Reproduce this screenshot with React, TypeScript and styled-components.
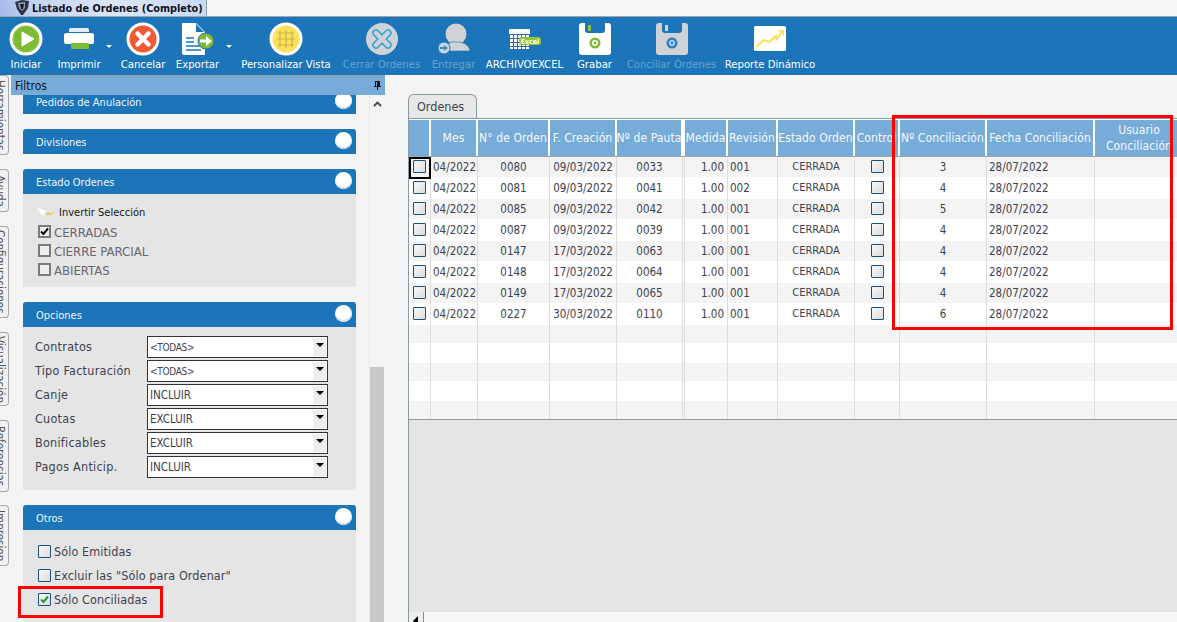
import React from "react";
import styled, { createGlobalStyle } from "styled-components";

const Global = createGlobalStyle`
  html, body { margin: 0; padding: 0; width: 1177px; height: 622px; overflow: hidden; background: #f4f4f4; }
  * { box-sizing: border-box; }
  body { font-family: "DejaVu Sans", "Noto Sans", sans-serif; font-stretch: condensed; font-size: 11px; color: #3c3c46; }
`;

const Page = styled.div`
  position: relative;
  width: 1177px;
  height: 622px;
  display: flex;
  flex-direction: column;
  overflow: hidden;
  background: #f4f4f4;
`;

const TabStrip = styled.div`
  height: 17px;
  flex: none;
  display: flex;
  background: #f6f6f6;
  border-bottom: 1px solid #a0a5ad;
`;
const DocTab = styled.div`
  width: 207px;
  height: 16px;
  display: flex;
  align-items: center;
  gap: 2px;
  padding-left: 14px;
  background: linear-gradient(80deg, #a3b9e6 0%, #c0d1f0 14%, #dbe6f7 55%, #c9d9f3 100%);
  border-right: 1px solid #8f9aa8;
  font-size: 10.8px;
  font-weight: 700;
  color: #10131c;
  white-space: nowrap;
  svg { flex: none; }
`;

const Toolbar = styled.div`
  height: 58px;
  flex: none;
  display: flex;
  background: #1c75b9;
  padding-left: 9px;
`;
const ToolItem = styled.div<{ $w: number; $ml: number; $off?: boolean }>`
  width: ${(p) => p.$w}px;
  margin-left: ${(p) => p.$ml}px;
  flex: none;
  display: flex;
  flex-direction: column;
  align-items: center;
  color: ${(p) => (p.$off ? "#6ba0cb" : "#ffffff")};
  white-space: nowrap;
`;
const IconSlot = styled.div`
  height: 44px;
  display: flex;
  align-items: center;
  justify-content: center;
  flex: none;
  svg { display: block; }
`;
const ToolLabel = styled.div`
  line-height: 13px;
  font-size: 11.25px;
  margin-top: -3px;
`;
const Caret = styled.div<{ $ml: number }>`
  flex: none;
  margin-left: ${(p) => p.$ml}px;
  margin-top: 28px;
  width: 0;
  height: 0;
  border-left: 3px solid transparent;
  border-right: 3px solid transparent;
  border-top: 3px solid #fff;
`;

const Body = styled.div`
  flex: 1;
  min-height: 0;
  display: flex;
`;

const SideTabs = styled.div`
  width: 11px;
  flex: none;
  display: flex;
  flex-direction: column;
  background: #f4f4f4;
`;
const SideTab = styled.div<{ $h: number; $gap: number }>`
  width: 9px;
  height: ${(p) => p.$h}px;
  margin-bottom: ${(p) => p.$gap}px;
  flex: none;
  border: 1px solid #a9a9a9;
  border-left: none;
  border-radius: 0 4px 4px 0;
  background: #f1f1f1;
  writing-mode: vertical-rl;
  text-align: center;
  line-height: 16px;
  font-size: 11.5px;
  color: #555;
  overflow: hidden;
  white-space: nowrap;
`;

const FilterDock = styled.div`
  width: 374px;
  flex: none;
  display: flex;
  flex-direction: column;
`;
const DockHeader = styled.div`
  height: 20px;
  flex: none;
  display: flex;
  align-items: center;
  justify-content: space-between;
  padding: 0 3px 0 4px;
  background: #77acd9;
  border-top: 1px solid #9a9fa5;
  color: #10131c;
  font-size: 12px;
`;
const DockBody = styled.div`
  flex: 1;
  min-height: 0;
  display: flex;
  overflow: hidden;
`;
const PanelColumn = styled.div`
  width: 345px;
  flex: none;
  padding: 0 0 0 12px;
  display: flex;
  flex-direction: column;
  gap: 15px;
  margin-top: -6px;
`;
const Panel = styled.section`
  display: flex;
  flex-direction: column;
  flex: none;
`;
const PanelHead = styled.div`
  height: 25px;
  flex: none;
  display: flex;
  align-items: center;
  justify-content: space-between;
  padding: 2px 4px 0 13px;
  background: #1c75b9;
  border-radius: 3px 3px 0 0;
  color: #eef5fb;
  font-size: 11px;
`;
const Knob = styled.span`
  width: 17px;
  height: 17px;
  border-radius: 50%;
  background: #ffffff;
  box-shadow: inset 0 -2px 0 #d8dfe8;
  flex: none;
  align-self: flex-start;
  margin-top: 1px;
`;
const PanelBody = styled.div<{ $h: number; $pt: number }>`
  height: ${(p) => p.$h}px;
  padding-top: ${(p) => p.$pt}px;
  background: #e5e5e5;
`;
const InvertRow = styled.div`
  display: flex;
  align-items: center;
  height: 15px;
  padding-left: 13px;
  gap: 4px;
  color: #14161e;
  margin-bottom: 3px;
`;
const FlatRow = styled.div`
  display: flex;
  align-items: center;
  height: 19px;
  padding-left: 15px;
  gap: 3px;
  font-size: 13px;
  color: #666670;
  white-space: nowrap;
`;
const FlatBox = styled.span`
  width: 13px;
  height: 13px;
  flex: none;
  margin-top: -3px;
  border: 2px solid #7a7a7a;
  background: #eeeeee;
  display: flex;
  align-items: center;
  justify-content: center;
`;
const FormRow = styled.div`
  height: 24px;
  display: flex;
  align-items: center;
  padding-left: 12px;
  font-size: 12.5px;
  letter-spacing: 0.25px;
  color: #3c4250;
`;
const FormLabel = styled.span`
  width: 112px;
  flex: none;
  white-space: nowrap;
  margin-top: -2px;
`;
const Select = styled.div`
  width: 181px;
  height: 22px;
  flex: none;
  display: flex;
  align-items: center;
  justify-content: space-between;
  padding: 1px 1px 1px 2px;
  background: #fff;
  border: 1px solid #333;
  color: #3c4250;
  letter-spacing: 0;
`;
const SelectValue = styled.span<{ $tight: boolean }>`
  font-size: ${(p) => (p.$tight ? "10px" : "11.5px")};
  letter-spacing: ${(p) => (p.$tight ? "-0.3px" : "0")};
`;
const SelectArrow = styled.span`
  width: 13px;
  height: 18px;
  background: #efefef;
  display: flex;
  align-items: flex-start;
  justify-content: center;
  padding-top: 5px;
  &::after {
    content: "";
    border-left: 4px solid transparent;
    border-right: 4px solid transparent;
    border-top: 4px solid #000;
  }
`;
const CheckRow = styled.div`
  height: 24px;
  display: flex;
  align-items: center;
  padding-left: 15px;
  gap: 3px;
  font-size: 12.5px;
  letter-spacing: 0.1px;
  color: #3c4250;
  white-space: nowrap;
`;
const BlueBox = styled.span`
  width: 13px;
  height: 13px;
  flex: none;
  border: 1px solid #1d4f7c;
  border-radius: 1px;
  background: linear-gradient(135deg, #f8f8f8, #dcdcdc);
  display: flex;
  align-items: center;
  justify-content: center;
`;
const DockScroll = styled.div`
  width: 15px;
  flex: none;
  margin-left: 13px;
  display: flex;
  flex-direction: column;
  background: #f4f4f4;
  border-left: 1px solid #e9e9e9;
`;
const ScrollUp = styled.div`
  height: 272px;
  flex: none;
  display: flex;
  justify-content: center;
  padding-top: 6px;
`;
const ScrollThumb = styled.div`
  flex: 1;
  background: #c9c9c9;
`;

const Main = styled.div`
  flex: 1;
  min-width: 0;
  display: flex;
  flex-direction: column;
  padding: 19px 0 0 23px;
`;
const GridTab = styled.div`
  width: 69px;
  height: 24px;
  flex: none;
  display: flex;
  align-items: center;
  padding-left: 8px;
  border: 1px solid #8a9aa3;
  border-bottom: none;
  border-radius: 6px 6px 0 0;
  background: #e8e8e8;
  font-size: 12.5px;
  color: #3c4250;
`;
const GridBox = styled.div`
  flex: 1;
  min-height: 0;
  display: flex;
  flex-direction: column;
  border-top: 1px solid #8a9aa3;
  border-left: 1px solid #8a9aa3;
  background: #e5e5e5;
  overflow: hidden;
`;
const GRID = "22px 47px 72px 67px 66px 2px 43px 50px 77px 45px 87px 108px 90px";
const HeadRow = styled.div`
  height: 38px;
  flex: none;
  display: grid;
  grid-template-columns: ${GRID};
  background: #fff;
  border-bottom: 1px solid #a4a4a4;
`;
const HeadCell = styled.div`
  background: #77acd9;
  border-right: 2px solid #fff;
  border-top: 1px solid #fff;
  display: flex;
  align-items: center;
  justify-content: center;
  text-align: center;
  color: #f4f8fc;
  font-size: 12px;
  letter-spacing: 0.1px;
  line-height: 16px;
  white-space: nowrap;
  overflow: hidden;
`;
const DataRow = styled.div<{ $h: number; $alt: boolean }>`
  height: ${(p) => p.$h}px;
  flex: none;
  display: grid;
  grid-template-columns: ${GRID};
  background: ${(p) => (p.$alt ? "#f4f4f4" : "#ffffff")};
`;
const Cell = styled.div<{ $al?: string }>`
  border-right: 1px solid #dddddd;
  display: flex;
  align-items: center;
  justify-content: ${(p) => p.$al || "center"};
  padding: ${(p) => (p.$al === "flex-start" ? "0 0 1px 2px" : p.$al === "flex-end" ? "0 3px 1px 0" : "0 0 1px")};
  font-size: 11.5px;
  color: #3c4250;
  white-space: nowrap;
  overflow: hidden;
`;
const FocusCell = styled(Cell)`
  position: relative;
  overflow: visible;
  z-index: 1;
  &::after {
    content: "";
    position: absolute;
    inset: 0 -1px -2px 0;
    border: 2px solid #000;
  }
`;
const StateCell = styled(Cell)`
  font-size: 11px;
`;
const SlimCell = styled(Cell)`
  padding: 0;
  justify-content: flex-start;
`;
const GridFill = styled.div`
  flex: 1;
  min-height: 0;
  border-top: 1px solid #999;
`;
const HScroll = styled.div`
  height: 10px;
  flex: none;
  display: flex;
  background-color: #f8f8f8;
  background-image: radial-gradient(#ececec 0.5px, transparent 0.6px);
  background-size: 2px 2px;
`;
const HButton = styled.div`
  width: 15px;
  height: 10px;
  flex: none;
  background: #efefef;
  border-right: 1px solid #8e8e8e;
  overflow: hidden;
  padding: 4px 0 0 4px;
  &::after {
    content: "";
    display: block;
    width: 0;
    height: 0;
    border-top: 5px solid transparent;
    border-bottom: 5px solid transparent;
    border-right: 5px solid #000;
  }
`;

const RedMark = styled.div<{ $x: number; $y: number; $w: number; $h: number }>`
  position: absolute;
  left: ${(p) => p.$x}px;
  top: ${(p) => p.$y}px;
  width: ${(p) => p.$w}px;
  height: ${(p) => p.$h}px;
  border: 3px solid #ff0000;
  pointer-events: none;
`;

const Logo = () => (
  <svg width="16" height="16" viewBox="0 0 16 16">
    <path d="M1 2 L8 0 L15 1 L14 8 L9 15 L7 15 L3 9 Z" fill="#2b3140" />
    <path d="M4 3 L11 2 L11 8 L8 11 L5 8 Z" fill="#8f9bb3" />
    <path d="M6 4 L10 4 L9 9 L7 9 Z" fill="#131722" />
  </svg>
);
const IconPlay = () => (
  <svg width="34" height="34" viewBox="0 0 34 34">
    <circle cx="17" cy="17" r="15" fill="#8cc63f" stroke="#fff" strokeWidth="3" />
    <circle cx="17" cy="17" r="12" fill="#7dbb35" />
    <path d="M13 10 L25 17 L13 24 Z" fill="#fff" stroke="#fff" strokeLinejoin="round" />
  </svg>
);
const IconPrinter = () => (
  <svg width="34" height="32" viewBox="0 0 34 32">
    <path d="M7 9 V7 Q7 5 9 5 H25 Q27 5 27 7 V9 Z" fill="#e4eef6" />
    <path d="M2 12 Q2 10 5 10 H29 Q32 10 32 12 V19 Q32 21 30 21 H4 Q2 21 2 19 Z" fill="#fff" />
    <rect x="9" y="20" width="18" height="6" rx="1" fill="#7ebb35" />
  </svg>
);
const IconCancel = () => (
  <svg width="34" height="34" viewBox="0 0 34 34">
    <circle cx="17" cy="17" r="15" fill="#f15a33" stroke="#fff" strokeWidth="3" />
    <path d="M11.5 11.5 L22.5 22.5 M22.5 11.5 L11.5 22.5" stroke="#fff" strokeWidth="4.5" strokeLinecap="round" />
  </svg>
);
const IconExport = () => (
  <svg width="34" height="34" viewBox="0 0 34 34">
    <path d="M1 1 H15 L24 10 V33 H3 Q1 33 1 31 Z" fill="#fff" />
    <path d="M15 2 L23 10 H15 Z" fill="#1c75b9" />
    <path d="M5 16 H13 M5 20 H13 M5 24 H20 M5 28 H20" stroke="#1c75b9" strokeWidth="1.3" />
    <circle cx="25" cy="19" r="8" fill="#7ebb35" stroke="#1c75b9" strokeWidth="1" />
    <path d="M19 17.5 H25 V14 L31 19 L25 24 V20.5 H19 Z" fill="#fff" />
  </svg>
);
const IconGrid = () => (
  <svg width="34" height="34" viewBox="0 0 34 34">
    <circle cx="17" cy="17" r="15" fill="#ffe05c" stroke="#fff" strokeWidth="3" />
    <path d="M11 9 V25 M17 8 V26 M23 9 V25 M9 11 H25 M8 17 H26 M9 23 H25" stroke="#c3b54a" strokeWidth="1.2" fill="none" />
  </svg>
);
const IconCloseOff = () => (
  <svg width="34" height="34" viewBox="0 0 34 34">
    <circle cx="17" cy="17" r="16" fill="#cfd2d6" />
    <path d="M11 11 L23 23 M23 11 L11 23" stroke="#38a3dc" strokeWidth="7.5" strokeLinecap="round" />
    <path d="M11 11 L23 23 M23 11 L11 23" stroke="#cfd2d6" strokeWidth="4.5" strokeLinecap="round" />
  </svg>
);
const IconDeliver = () => (
  <svg width="36" height="34" viewBox="0 0 36 34">
    <circle cx="20" cy="12" r="10.5" fill="#cfd2d6" />
    <path d="M8 29 Q9 22 16 20 H24 Q33 22 34 29 Z" fill="#cfd2d6" stroke="#1c75b9" strokeWidth="0.6" />
    <circle cx="8" cy="26" r="6" fill="#cfd2d6" stroke="#1c75b9" strokeWidth="1" />
    <path d="M4 25 H8 V23 L12 26 L8 29 V27 H4 Z" fill="#3b8bc9" />
  </svg>
);
const IconExcel = () => (
  <svg width="34" height="24" viewBox="0 0 34 24">
    <rect x="1" y="2" width="21" height="20" rx="1" fill="#fff" />
    <path d="M1.5 7 V22 M5.5 7 V22 M9.5 7 V22 M13.5 7 V22 M17.5 7 V22 M21.5 7 V22 M1 7.5 H22 M1 11.5 H22 M1 15.5 H22 M1 19.5 H22" stroke="#2f6f9f" strokeWidth="1" fill="none" />
    <rect x="11" y="10" width="22" height="8" rx="3" fill="#8cc63f" />
    <text x="22" y="16.5" textAnchor="middle" fontSize="7" fontWeight="700" fill="#ffffff" fontFamily="'DejaVu Sans', sans-serif">Excel</text>
  </svg>
);
const Floppy = ({ body, dot, ring }: { body: string; dot: string; ring: string }) => (
  <svg width="32" height="33" viewBox="0 0 32 33">
    <path d="M3 0 H29 Q32 0 32 3 V29 Q32 32 29 32 H3 Q0 32 0 29 V3 Q0 0 3 0 Z" fill={body} />
    <path d="M6 0 V7 Q6 10 9 10 H23 Q26 10 26 7 V0 Z" fill="#1c75b9" />
    <rect x="9" y="2" width="3" height="6" fill={dot} />
    <circle cx="16" cy="20" r="5.5" fill={ring} />
    <circle cx="16" cy="20" r="3" fill={body} />
    <circle cx="16" cy="20" r="1.4" fill={ring} />
  </svg>
);
const IconChart = () => (
  <svg width="32" height="26" viewBox="0 0 32 26">
    <rect x="0" y="0" width="32" height="25" rx="1.5" fill="#fff" />
    <path d="M2 21 L10 14 L15 16 L22 10 L23 13 L28 6" stroke="#ffe05c" strokeWidth="2" fill="none" />
    <path d="M24.5 4 H30 V10 Z" fill="#ffe05c" />
  </svg>
);

type Tool = { label: string; w: number; ml: number; off?: boolean; icon: React.ReactNode; caret?: number };
const tools: Tool[] = [
  { label: "Iniciar", w: 34, ml: 0, icon: <IconPlay /> },
  { label: "Imprimir", w: 42, ml: 15, icon: <IconPrinter />, caret: 6 },
  { label: "Cancelar", w: 44, ml: 9, icon: <IconCancel /> },
  { label: "Exportar", w: 45, ml: 10, icon: <IconExport />, caret: 6 },
  { label: "Personalizar Vista", w: 90, ml: 9, icon: <IconGrid /> },
  { label: "Cerrar Ordenes", w: 79, ml: 11, off: true, icon: <IconCloseOff /> },
  { label: "Entregar", w: 45, ml: 10, off: true, icon: <IconDeliver /> },
  { label: "ARCHIVOEXCEL", w: 77, ml: 10, icon: <IconExcel /> },
  { label: "Grabar", w: 35, ml: 14, icon: <Floppy body="#ffffff" dot="#8cc63f" ring="#7ebb35" /> },
  { label: "Conciliar Órdenes", w: 89, ml: 15, off: true, icon: <Floppy body="#cfd2d6" dot="#cfd2d6" ring="#2f80c0" /> },
  { label: "Reporte Dinámico", w: 88, ml: 10, icon: <IconChart /> },
];

const sideTabs = [
  { t: "Herramientas", h: 80, g: 14 },
  { t: "Ayuda", h: 43, g: 14 },
  { t: "Configuraciones", h: 92, g: 14 },
  { t: "Visualización", h: 74, g: 14 },
  { t: "Referencias", h: 72, g: 13 },
  { t: "Impresion", h: 61, g: 0 },
];

const heads: React.ReactNode[] = [
  "", "Mes", "N° de Orden", "F. Creación", "Nº de Pauta", "", "Medida", "Revisión", "Estado Orden", "Control", "Nº Conciliación", "Fecha Conciliación",
  <>Usuario<br />Conciliación</>,
];

const rows = [
  ["0080", "09/03/2022", "0033", "001", "3"],
  ["0081", "09/03/2022", "0041", "002", "4"],
  ["0085", "09/03/2022", "0042", "001", "5"],
  ["0087", "09/03/2022", "0039", "001", "4"],
  ["0147", "17/03/2022", "0063", "001", "4"],
  ["0148", "17/03/2022", "0064", "001", "4"],
  ["0149", "17/03/2022", "0065", "001", "4"],
  ["0227", "30/03/2022", "0110", "001", "6"],
];
const emptyHeights = [18, 20, 18, 20, 18];

const Check = ({ color }: { color: string }) => (
  <svg width="9" height="9" viewBox="0 0 9 9">
    <path d="M1 4.5 L3.5 7 L8 1.5" stroke={color} strokeWidth="2" fill="none" />
  </svg>
);

const Head = ({ title, children }: { title: string; children?: React.ReactNode }) => (
  <Panel>
    <PanelHead>
      <span>{title}</span>
      <Knob />
    </PanelHead>
    {children}
  </Panel>
);

const selects = [
  ["Contratos", "<TODAS>"],
  ["Tipo Facturación", "<TODAS>"],
  ["Canje", "INCLUIR"],
  ["Cuotas", "EXCLUIR"],
  ["Bonificables", "EXCLUIR"],
  ["Pagos Anticip.", "INCLUIR"],
];

export default function App() {
  return (
    <Page>
      <Global />
      <TabStrip>
        <DocTab>
          <Logo />
          <span>Listado de Ordenes (Completo)</span>
        </DocTab>
      </TabStrip>
      <Toolbar>
        {tools.map((t) => (
          <React.Fragment key={t.label}>
            <ToolItem $w={t.w} $ml={t.ml} $off={t.off}>
              <IconSlot>{t.icon}</IconSlot>
              <ToolLabel>{t.label}</ToolLabel>
            </ToolItem>
            {t.caret ? <Caret $ml={t.caret} /> : null}
          </React.Fragment>
        ))}
      </Toolbar>
      <Body>
        <SideTabs>
          {sideTabs.map((s) => (
            <SideTab key={s.t} $h={s.h} $gap={s.g}>{s.t}</SideTab>
          ))}
        </SideTabs>
        <FilterDock>
          <DockHeader>
            <span>Filtros</span>
            <svg width="9" height="11" viewBox="0 0 9 11">
              <path d="M2 1 H7 V6 H8 V7 H5 V10 H4 V7 H1 V6 H2 Z M3 2 V6 H4 V2 Z" fill="#10131c" fillRule="evenodd" />
            </svg>
          </DockHeader>
          <DockBody>
            <PanelColumn>
              <Head title="Pedidos de Anulación" />
              <Head title="Divisiones" />
              <Head title="Estado Ordenes">
                <PanelBody $h={93} $pt={11}>
                  <InvertRow>
                    <svg width="19" height="12" viewBox="0 0 19 12">
                      <path d="M1 1 L11 4 L7 6 L9 10 L5 7 Z" fill="#ffffff" />
                      <path d="M10 6 Q12 3 14 6 Q16 7 18 4 Q17 9 14 8 Q12 7 11 9 Z" fill="#e8cf6a" />
                    </svg>
                    <span>Invertir Selección</span>
                  </InvertRow>
                  <FlatRow><FlatBox><Check color="#000" /></FlatBox>CERRADAS</FlatRow>
                  <FlatRow><FlatBox />CIERRE PARCIAL</FlatRow>
                  <FlatRow><FlatBox />ABIERTAS</FlatRow>
                </PanelBody>
              </Head>
              <Head title="Opciones">
                <PanelBody $h={163} $pt={8}>
                  {selects.map(([l, v]) => (
                    <FormRow key={l}>
                      <FormLabel>{l}</FormLabel>
                      <Select>
                        <SelectValue $tight={v.startsWith("<")}>{v}</SelectValue>
                        <SelectArrow />
                      </Select>
                    </FormRow>
                  ))}
                </PanelBody>
              </Head>
              <Head title="Otros">
                <PanelBody $h={100} $pt={9}>
                  <CheckRow><BlueBox />Sólo Emitidas</CheckRow>
                  <CheckRow><BlueBox />Excluir las "Sólo para Ordenar"</CheckRow>
                  <CheckRow><BlueBox><Check color="#1e9e3a" /></BlueBox>Sólo Conciliadas</CheckRow>
                </PanelBody>
              </Head>
            </PanelColumn>
            <DockScroll>
              <ScrollUp>
                <svg width="9" height="6" viewBox="0 0 9 6">
                  <path d="M1 5 L4.5 1.5 L8 5" stroke="#444" strokeWidth="1.8" fill="none" />
                </svg>
              </ScrollUp>
              <ScrollThumb />
            </DockScroll>
          </DockBody>
        </FilterDock>
        <Main>
          <GridTab>Ordenes</GridTab>
          <GridBox>
            <HeadRow>
              {heads.map((h, i) => (
                <HeadCell key={i}>{h}</HeadCell>
              ))}
            </HeadRow>
            {rows.map((r, i) => (
              <DataRow key={r[0]} $h={i % 2 === 0 ? 20 : 22} $alt={i % 2 === 0}>
                {i === 0 ? <FocusCell><BlueBox /></FocusCell> : <Cell><BlueBox /></Cell>}
                <Cell $al="flex-start">04/2022</Cell>
                <Cell>{r[0]}</Cell>
                <Cell>{r[1]}</Cell>
                <Cell>{r[2]}</Cell>
                <SlimCell>:</SlimCell>
                <Cell $al="flex-end">1.00</Cell>
                <Cell $al="flex-start">{r[3]}</Cell>
                <StateCell>CERRADA</StateCell>
                <Cell><BlueBox /></Cell>
                <Cell>{r[4]}</Cell>
                <Cell $al="flex-start">28/07/2022</Cell>
                <Cell />
              </DataRow>
            ))}
            {emptyHeights.map((h, i) => (
              <DataRow key={i} $h={h} $alt={i % 2 === 0}>
                {heads.map((_, c) => (
                  <Cell key={c} />
                ))}
              </DataRow>
            ))}
            <GridFill />
            <HScroll>
              <HButton />
            </HScroll>
          </GridBox>
        </Main>
      </Body>
      <RedMark $x={892} $y={115} $w={281} $h={215} />
      <RedMark $x={18} $y={586} $w={145} $h={32} />
    </Page>
  );
}
